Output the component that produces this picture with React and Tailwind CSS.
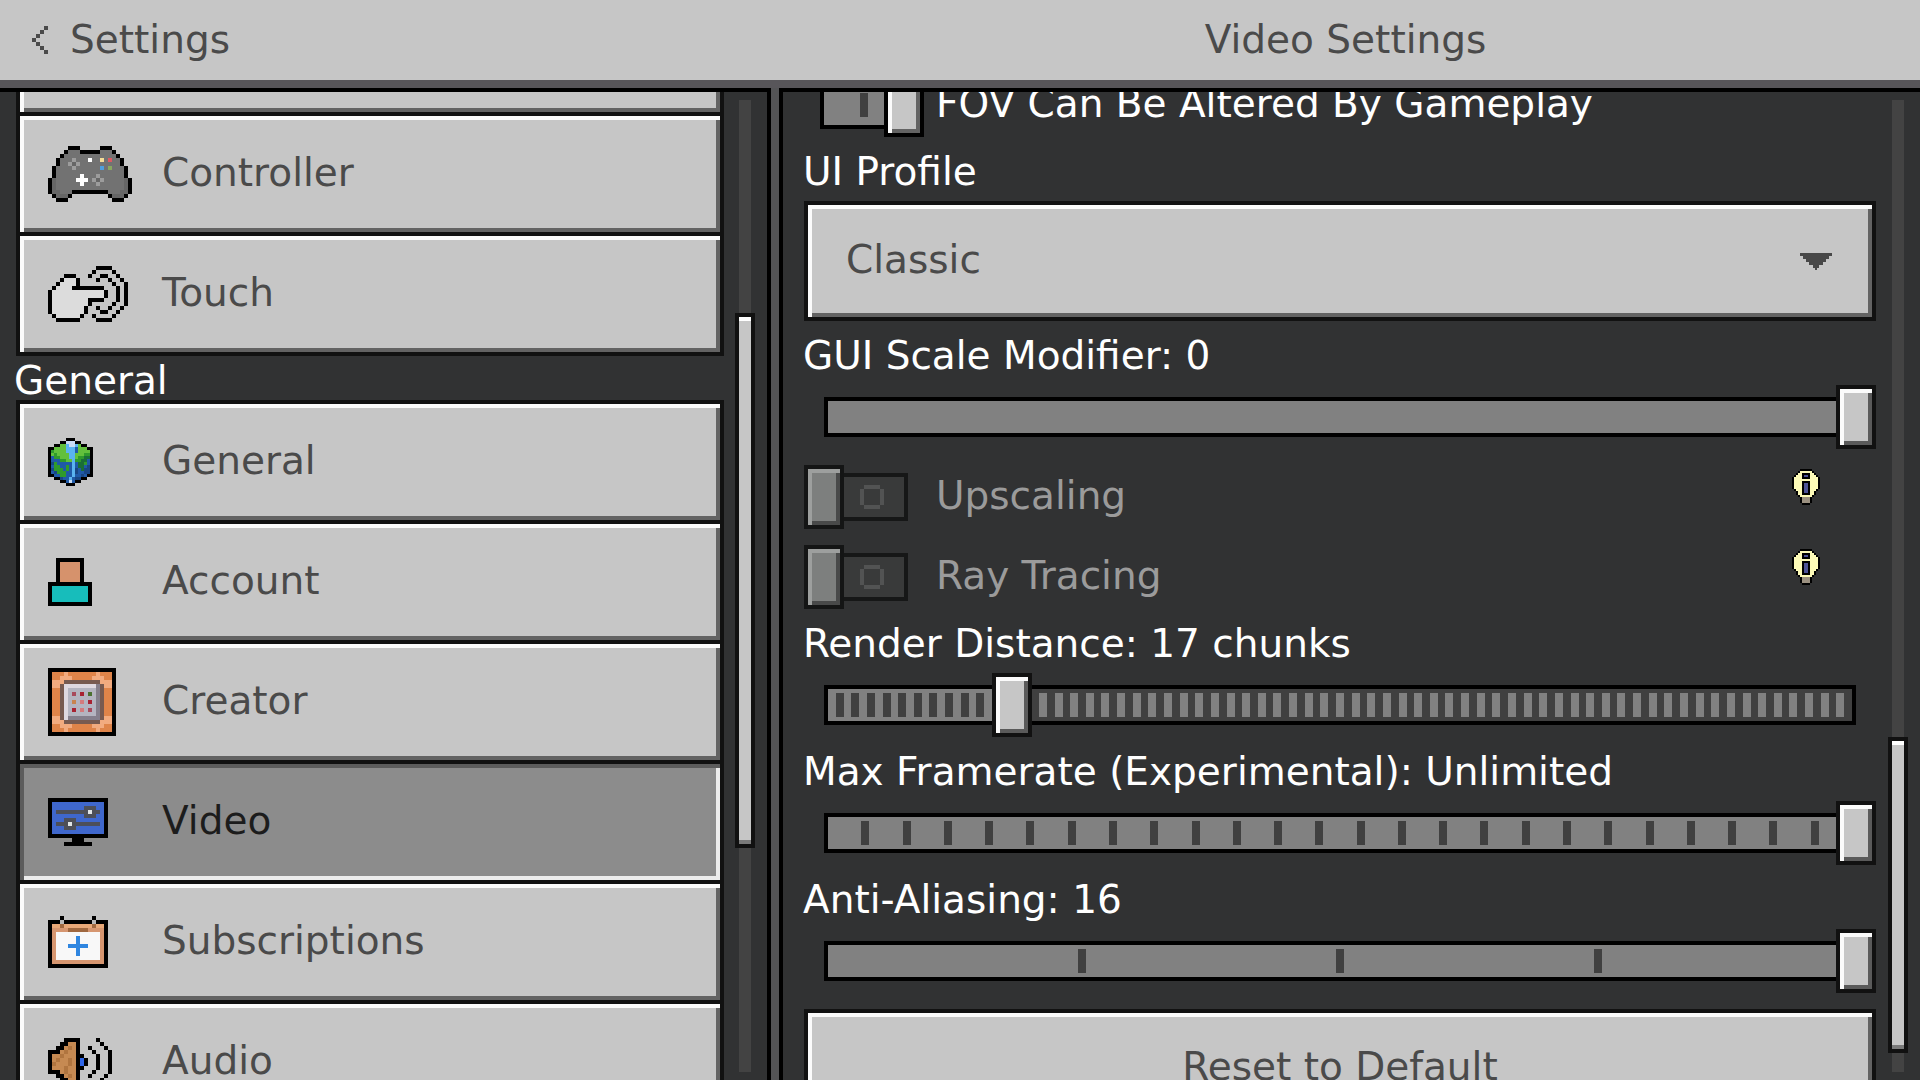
import { useState } from 'react'

const SHADES = {
  k: '#000000',
  w: '#ffffff',
  g: '#727272',
  G: '#666666',
  l: '#9c9c9c',
  y: '#f5dc96',
  r: '#dc5a62',
  b: '#4f9fdc',
  n: '#8aa860',
  h: '#dcdcdc',
  c: '#c68a52',
  C: '#b0753f',
  u: '#2f66e8',
  o: '#df8449',
  p: '#f2ab7f',
  m: '#775a50',
  d: '#ded8e0',
  s: '#b4b4c0',
  e: '#857f8c',
  R: '#a82232',
  P: '#d47a7c',
  A: '#a84a5c',
  N: '#4a7030',
  O: '#c88450',
  1: '#62c03c',
  2: '#2f9a2c',
  3: '#1a6e38',
  4: '#1f5aa8',
  5: '#184684',
  6: '#5ab4f0',
  7: '#c8dcf5',
  Y: '#fdfbb8',
  v: '#4d5296',
  t: '#9a9080',
}

// Each character is one square cell, '.' is see-through
function PixelArt({ rows, cell = 4 }) {
  const cols = rows[0].length
  return (
    <svg
      width={cols * cell}
      height={rows.length * cell}
      viewBox={`0 0 ${cols} ${rows.length}`}
      shapeRendering="crispEdges"
      aria-hidden="true"
    >
      {rows.map((row, y) =>
        [...row].map((ch, x) =>
          ch === '.' ? null : <rect key={`${x}-${y}`} x={x} y={y} width="1" height="1" fill={SHADES[ch]} />
        )
      )}
    </svg>
  )
}

const CONTROLLER = [
  '.....kkk.....kkk.....',
  '....kgggkkkkkgggk....',
  '...kgggggggggggggk...',
  '..kggglgggwggygrggk..',
  '..kgglGlggggggggggk..',
  '.kgggglggggggbgngggk.',
  '.kgggggggggggggggggk.',
  '.kggggggwggglggggggk.',
  'kGgggggwwwglGlgggggGk',
  'kGggggggwggglggggggGk',
  'kGgggggggggggggggggGk',
  'kGGgggkkkkkkkkkgggGGk',
  '.kGGGk.........kGGGk.',
  '..kkk...........kkk..',
]

const TOUCH = [
  '............kkkk....',
  '...........k....k...',
  '....kkk...k..kk..k..',
  '...khhhk....k..k..k.',
  '..khhhhk........k..k',
  '.khhhhkkkkkkkk...k.k',
  'khhhhhhhhhhhhhk..k.k',
  'khhhhhhhhhhhhhk..k.k',
  'khhhhhhhhhkkkk...k.k',
  'khhhhhhhhhk.....k..k',
  'khhhhhhhhk..k..k..k.',
  'khhhhhhhhk...kk..k..',
  '.khhhhhhk..k....k...',
  '..kkkkkk....kkkk....',
]

const GLOBE = [
  '......kkk......',
  '....kk777kk....',
  '..kk1167761kk..',
  'kk11116664111kk',
  'k2111166641111k',
  'k1211116611122k',
  'k4221116612233k',
  'k4442211622334k',
  'k5244444643324k',
  'k4224424643345k',
  'k5222424654355k',
  'k4522244654455k',
  'kk44224464454kk',
  '..kk5446455kk..',
  '....kk474kk....',
  '......kkk......',
]

const CREATOR = [
  'kkkkkkkkkkkkkkkkk',
  'kooopooooooopoook',
  'koopppooooopppook',
  'kpppmmmmmmmmmpppk',
  'kppmddddddddemppk',
  'koomdsssssssemook',
  'koomdsAsRsNsemook',
  'koomdsssssssemook',
  'koomdsOsPsRsemook',
  'koomdsssssssemook',
  'koomdsRsPsAsemook',
  'koomdsssssssemook',
  'kppmdeeeeeeeemppk',
  'kpppmmmmmmmmmpppk',
  'koopppooooopppook',
  'kooopooooooopoook',
  'kkkkkkkkkkkkkkkkk',
]

const AUDIO = [
  '....kkkk....k...',
  '...kkcck.....k..',
  '..kkcCck..k...k.',
  'kkkcCcck...k...k',
  'kccCccckk...k..k',
  'kcCccCckuk..k..k',
  'kCcccCckuk..k..k',
  'kcccCcckk...k..k',
  'kkkcCcck...k...k',
  '..kkcCck..k...k.',
  '...kkcck.....k..',
  '....kkkk....k...',
]

const BULB = [
  '....kkkkkk....',
  '...kYYYYYYk...',
  '..kYYkkkkYYk..',
  '.kYYYkvvkYYYk.',
  'kYYYYkkkkYYYYk',
  'kYYYYYYYYYYYYk',
  'kYYYYkkkkYYYYk',
  'kYYYYkvvkYYYYk',
  'kYYYYkvvkYYYYk',
  'kYYYYkvvkYYYYk',
  '.kYYYkvvkYYYk.',
  '..kYYkvvkYYk..',
  '..kYYkkkkYYk..',
  '...kYYYYYYk...',
  '....kttttk....',
  '....kttttk....',
  '....kttttk....',
  '.....kkkk.....',
]

const BACK = ['...k', '..k.', '.k..', 'k...', '.k..', '..k.', '...k']

function AccountIcon() {
  return (
    <svg width="44" height="48" viewBox="0 0 11 12" shapeRendering="crispEdges" aria-hidden="true">
      <rect x="2" width="7" height="7" />
      <rect x="3" y="1" width="5" height="5" fill="#d6926c" />
      <rect y="6" width="11" height="6" />
      <rect x="1" y="7" width="9" height="4" fill="#17bdbb" />
    </svg>
  )
}

function VideoIcon() {
  return (
    <svg width="60" height="48" viewBox="0 0 15 12" shapeRendering="crispEdges" aria-hidden="true">
      <rect width="15" height="10" />
      <rect x="1" y="1" width="13" height="8" fill="#3f67cc" />
      <path d="M2 3h11v1H2zM9 2h3v3H9zM2 6h11v1H2zM4 5h3v3H4z" fill="#4d4f58" />
      <path d="M10 3h1v1h-1zM5 6h1v1H5z" fill="#e0e4e4" />
      <path d="M6 10h3v1H6zM4 11h7v1H4z" />
    </svg>
  )
}

function CalendarIcon() {
  return (
    <svg width="60" height="52" viewBox="0 0 15 13" shapeRendering="crispEdges" aria-hidden="true">
      <path d="M0 1h15v12H0zM3 0h1v1H3zM11 0h1v1h-1z" />
      <rect x="1" y="2" width="13" height="10" fill="#d69670" />
      <rect x="1" y="2" width="13" height="1" fill="#e8a878" />
      <path d="M3 1h1v1H3zM11 1h1v1h-1z" fill="#b8b8b8" />
      <path d="M3 2h1v1H3zM11 2h1v1h-1zM5 3h5v1H5z" fill="#a0683f" />
      <rect x="2" y="4" width="11" height="7" fill="#f8f8f8" />
      <path d="M7 5h1v5H7zM5 7h5v1H5z" fill="#2f86e0" />
    </svg>
  )
}

const BEVEL = 'shadow-[inset_4px_4px_0_#fbfbfb,inset_-4px_-4px_0_#636363]'

function NavButton({ icon, label, name, active, onClick }) {
  return (
    <button
      type="button"
      aria-label={name}
      onClick={onClick}
      className={`-mt-1 flex h-31 w-full items-center border-4 border-[#111111] pl-7 text-left first:mt-0 ${
        active
          ? 'bg-[#8c8c8c] text-[#1c1c1c] shadow-[inset_4px_4px_0_#5c5c5c,inset_-4px_-4px_0_#ececec]'
          : `bg-[#c6c6c6] text-[#4a4a4a] ${BEVEL}`
      }`}
    >
      <span className="w-[114px] shrink-0">{icon}</span>
      <span className="pb-0.5">{label}</span>
    </button>
  )
}

function ScrollBar({ start, size }) {
  return (
    <div className="relative my-2 flex w-5 shrink-0 justify-center">
      <div className="w-3 bg-[#434343]" />
      <div
        className="absolute inset-x-0 border-4 border-[#111111] bg-[#c6c6c6] shadow-[inset_0_4px_0_#ffffff,inset_0_-4px_0_#7a7a7a]"
        style={{ top: `${start * 100}%`, height: `${size * 100}%` }}
      />
    </div>
  )
}

function Toggle({ label, disabled, checked, onChange, hint }) {
  return (
    <div className="flex h-16 items-center justify-between pr-14">
      <label className={`flex items-center gap-3 whitespace-nowrap ${disabled ? 'text-[#9b9b9b]' : 'text-white'}`}>
        <input type="checkbox" className="sr-only" checked={checked} disabled={disabled} onChange={onChange} />
        <span className="relative flex h-16 w-30 items-center justify-center">
          <span
            className={`flex h-12 w-22 items-center border-4 ${
              disabled ? 'border-[#161717] bg-[#393a3a]' : 'border-black bg-[#818181]'
            } ${checked ? 'justify-start pl-9' : 'justify-end pr-5'}`}
          >
            {checked ? (
              <svg width="8" height="24" viewBox="0 0 2 6" shapeRendering="crispEdges" aria-hidden="true">
                <rect width="2" height="6" fill="#404040" />
              </svg>
            ) : (
              <svg width="24" height="24" viewBox="0 0 6 6" shapeRendering="crispEdges" aria-hidden="true">
                <path d="M1 0h4v1H1zM1 5h4v1H1zM0 1h1v4H0zM5 1h1v4H5z" fill="#525353" />
              </svg>
            )}
          </span>
          <span
            className={`absolute top-0 h-16 w-10 border-4 ${checked ? 'right-0' : 'left-0'} ${
              disabled
                ? 'border-[#141515] bg-[#7d7f7e] shadow-[inset_4px_4px_0_#9d9f9e,inset_-4px_-4px_0_#484949]'
                : `border-black bg-[#c6c6c6] ${BEVEL}`
            }`}
          />
        </span>
        <span className="pb-0.5">{label}</span>
      </label>
      {hint && (
        <button type="button" aria-label={`About ${label}`} className="mb-5">
          <PixelArt rows={BULB} cell={2} />
        </button>
      )}
    </div>
  )
}

function Slider({ id, label, steps, initial, shadeRest }) {
  const [value, setValue] = useState(initial)
  const filled = value / steps
  return (
    <div>
      <FieldLabel htmlFor={id}>{label}</FieldLabel>
      <div className="relative ml-px flex h-16 items-center">
        <div className="relative mx-5 flex h-10 flex-1 items-center border-4 border-black bg-[#818181]">
          {shadeRest && (
            <div className="absolute inset-y-0 right-0 bg-[#404040]" style={{ left: `${filled * 100}%` }} />
          )}
          <div className="absolute -inset-x-1 h-6">
            {Array.from({ length: steps - 1 }, (_, i) => i + 1).map(n => (
              <div
                key={n}
                className={`absolute inset-y-0 -ml-1 w-2 ${shadeRest && n > value ? 'bg-[#818181]' : 'bg-[#404040]'}`}
                style={{ left: `${(n / steps) * 100}%` }}
              />
            ))}
          </div>
        </div>
        <input
          id={id}
          type="range"
          min="0"
          max={steps}
          value={value}
          onChange={e => setValue(Number(e.target.value))}
          className="absolute inset-0 h-16 w-full appearance-none bg-transparent outline-none [&::-webkit-slider-thumb]:h-16 [&::-webkit-slider-thumb]:w-10 [&::-webkit-slider-thumb]:appearance-none [&::-webkit-slider-thumb]:border-4 [&::-webkit-slider-thumb]:border-solid [&::-webkit-slider-thumb]:border-[#111111] [&::-webkit-slider-thumb]:bg-[#c6c6c6] [&::-webkit-slider-thumb]:shadow-[inset_4px_4px_0_#fbfbfb,inset_-4px_-4px_0_#5a5a5a]"
        />
      </div>
    </div>
  )
}

function FieldLabel({ htmlFor, children }) {
  return (
    <label htmlFor={htmlFor} className="block h-16 pt-1 leading-[62px] whitespace-nowrap text-white">
      {children}
    </label>
  )
}

const INPUTS = [
  { name: 'Keyboard & Mouse', icon: null },
  { label: 'Controller', icon: <PixelArt rows={CONTROLLER} /> },
  { label: 'Touch', icon: <PixelArt rows={TOUCH} /> },
]

const GENERAL = [
  { label: 'General', icon: <PixelArt rows={GLOBE} cell={3} /> },
  { label: 'Account', icon: <AccountIcon /> },
  { label: 'Creator', icon: <PixelArt rows={CREATOR} /> },
  { label: 'Video', icon: <VideoIcon /> },
  { label: 'Subscriptions', icon: <CalendarIcon /> },
  { label: 'Audio', icon: <PixelArt rows={AUDIO} /> },
]

export default function App() {
  const [section, setSection] = useState('Video')
  const [fov, setFov] = useState(true)

  const nav = items =>
    items.map((item, i) => (
      <NavButton key={i} {...item} active={section === item.label} onClick={() => setSection(item.label)} />
    ))

  return (
    <div className="flex h-screen flex-col overflow-hidden bg-[#313233] font-['DejaVu_Sans',sans-serif] text-[39px] leading-[44px]">
      <header className="grid h-22 shrink-0 grid-cols-[771fr_1149fr] items-center border-b-8 border-[#58565a] bg-[#c6c6c6] text-[#4a4a4a]">
        <button type="button" className="flex items-center gap-[22px] pl-8 text-left">
          <svg width="16" height="28" viewBox="0 0 4 7" shapeRendering="crispEdges" aria-hidden="true">
            {BACK.map((row, y) => (
              <rect key={y} x={row.indexOf('k')} y={y} width="1" height="1" fill="#4a4a4a" />
            ))}
          </svg>
          Settings
        </button>
        <h1 className="text-center">Video Settings</h1>
      </header>

      <main className="grid min-h-0 flex-1 grid-cols-[771fr_1149fr] grid-rows-[minmax(0,1fr)]">
        <nav className="flex min-w-0 overflow-hidden border-t-4 border-r-4 border-black pr-3 pl-3">
          <div className="-mt-25 mr-[11px] min-w-0 flex-1">
            <div className="ml-1">{nav(INPUTS)}</div>
            <h2 className="h-11 pt-1 pl-0.5 leading-[42px] text-white">General</h2>
            <div className="ml-1">{nav(GENERAL)}</div>
          </div>
          <ScrollBar start={0.219} size={0.551} />
        </nav>

        <div className="flex min-w-0 border-l-8 border-[#545456]">
          <section className="flex min-w-0 flex-1 overflow-hidden border-t-4 border-l-4 border-black pr-3 pl-5">
            <div className="-mt-[19px] mr-3 min-w-0 flex-1">
              <div className="ml-px">
                <Toggle label="FOV Can Be Altered By Gameplay" checked={fov} onChange={() => setFov(!fov)} />
              </div>

              <FieldLabel htmlFor="profile">UI Profile</FieldLabel>
              <div className="relative ml-px flex items-center">
                <select
                  id="profile"
                  defaultValue="Classic"
                  className={`h-30 w-full appearance-none border-4 border-[#111111] bg-[#c6c6c6] pb-0.5 pl-[38px] text-[#4a4a4a] ${BEVEL}`}
                >
                  <option>Classic</option>
                  <option>Pocket</option>
                </select>
                <svg
                  width="32"
                  height="17"
                  viewBox="0 0 32 17"
                  className="pointer-events-none absolute right-11"
                  shapeRendering="crispEdges"
                  aria-hidden="true"
                >
                  <path d="M0 0h32v3h-3v3h-3v3h-3v3h-4v3h-2v2h-2v-2h-2v-3h-4V9H6V6H3V3H0z" fill="#484848" />
                </svg>
              </div>

              <Slider id="gui-scale" label="GUI Scale Modifier: 0" steps={1} initial={1} />

              <div className="mt-4 ml-px flex flex-col gap-4">
                <Toggle label="Upscaling" disabled checked={false} hint />
                <Toggle label="Ray Tracing" disabled checked={false} hint />
              </div>

              <Slider id="render" label="Render Distance: 17 chunks" steps={66} initial={12} shadeRest />
              <Slider id="framerate" label="Max Framerate (Experimental): Unlimited" steps={25} initial={25} />
              <Slider id="aliasing" label="Anti-Aliasing: 16" steps={4} initial={4} />

              <button
                type="button"
                className={`mt-4 ml-px h-30 w-[calc(100%-1px)] border-4 border-[#111111] bg-[#c6c6c6] pb-1 text-[#4a4a4a] ${BEVEL}`}
              >
                Reset to Default
              </button>
            </div>
            <ScrollBar start={0.655} size={0.325} />
          </section>
        </div>
      </main>
    </div>
  )
}
